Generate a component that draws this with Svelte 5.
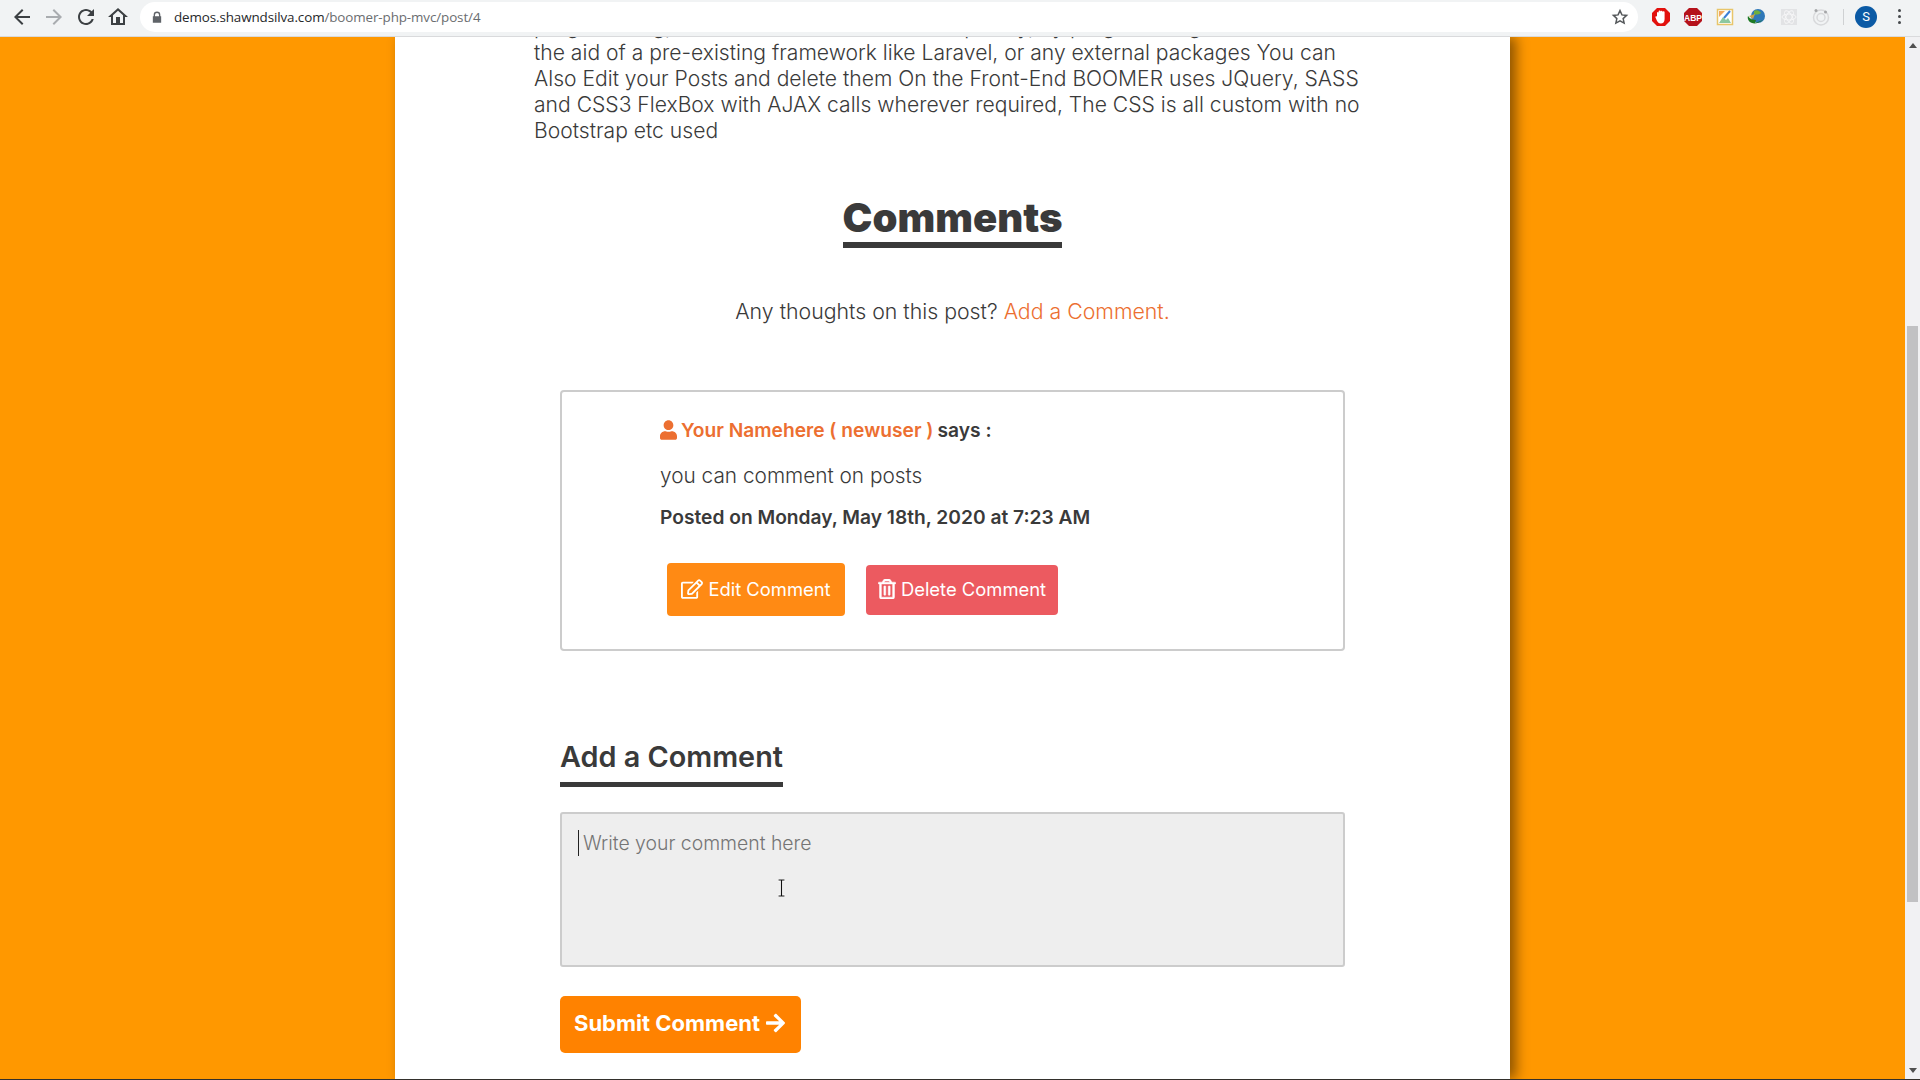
<script>
	const nav = [
		{ d: 'M20 11H7.83l5.59-5.59L12 4l-8 8 8 8 1.41-1.41L7.83 13H20v-2z', cls: 'on' },
		{ d: 'M4 11h12.17l-5.59-5.59L12 4l8 8-8 8-1.41-1.41L16.17 13H4v-2z', cls: 'off' },
		{ d: 'M17.65 6.35C16.2 4.9 14.21 4 12 4c-4.42 0-7.99 3.58-7.99 8s3.57 8 7.99 8c3.73 0 6.84-2.55 7.73-6h-2.08c-.82 2.33-3.04 4-5.65 4-3.31 0-6-2.69-6-6s2.69-6 6-6c1.66 0 3.14.69 4.22 1.78L13 11h7V4l-2.35 2.35z', cls: 'on' },
		{ d: 'M12 5.69l5 4.5V18h-3v-6h-4v6H7v-7.81l5-4.5M12 3L2 12h3v8h14v-8h3L12 3z', cls: 'on' }
	];
</script>

<div class="screen">
	<header class="toolbar">
		<div class="nav">
			{#each nav as n}
				<svg class="nav-icon {n.cls}" viewBox="0 0 24 24"><path d={n.d} /></svg>
			{/each}
		</div>
		<div class="omnibox">
			<svg class="lock" viewBox="0 0 12 14">
				<path d="M2 6V4.5a4 4 0 0 1 8 0V6h1v8H1V6zm1.6 0h4.8V4.5a2.4 2.4 0 0 0-4.8 0z" />
			</svg>
			<span class="url"><b>demos.shawndsilva.com</b>/boomer-php-mvc/post/4</span>
			<svg class="star" viewBox="0 0 24 24">
				<path d="M12 3.5l2.6 5.7 6.2.7-4.6 4.2 1.3 6.1L12 17.1l-5.5 3.1 1.3-6.1-4.6-4.2 6.2-.7z" />
			</svg>
		</div>
		<div class="extensions">
			<svg viewBox="0 0 20 20">
				<path fill="#e2110d" d="M6 1h8l5 5v8l-5 5H6l-5-5V6z" />
				<path fill="#fff" d="M6 9.5V6a1 1 0 0 1 1.6-.6V4.5a1 1 0 0 1 2 0 1 1 0 0 1 2 .4 1 1 0 0 1 2 .6v6.5c0 3-1.6 4.5-3.8 4.5-2 0-3-1-4-3L4.500 10.500c-.5-1 .7-1.800 1.500-1z" />
			</svg>
			<svg viewBox="0 0 20 20">
				<path fill="#b5121b" d="M6 1h8l5 5v8l-5 5H6l-5-5V6z" />
				<text x="10" y="13.500" text-anchor="middle" class="abp">ABP</text>
			</svg>
			<svg viewBox="0 0 20 20">
				<rect x="2.500" y="2.500" width="15" height="15" fill="#fff" stroke="#e8c56a" stroke-width="1.500" />
				<path fill="#8cc8a0" d="M4 16l4-6 3 3 2-2 3 5z" />
				<path fill="#f0a860" d="M4 4h6L4 10z" />
				<path stroke="#3d7fd6" stroke-width="2" d="M9 11l6-7" />
			</svg>
			<svg viewBox="0 0 20 20">
				<circle cx="11" cy="9" r="7" fill="#2f78b8" />
				<path fill="#6fae3e" d="M7 4c3-2 6 0 7 2-2 2-5 1-7 2z" />
				<path fill="#1e7a24" d="M1 9c2 3 5 4 8 4l-1 3 8-3c-4 3-8 4-11 3-3-1-5-4-4-7z" />
				<path fill="#c9a24a" d="M2 9l6-2-2 5z" />
			</svg>
			<svg viewBox="0 0 20 20">
				<rect x="2" y="2" width="16" height="16" fill="#e2e3e5" />
				<g fill="none" stroke="#f6f6f7" stroke-width="1">
					<ellipse cx="10" cy="10" rx="7" ry="3" />
					<ellipse cx="10" cy="10" rx="7" ry="3" transform="rotate(60 10 10)" />
					<ellipse cx="10" cy="10" rx="7" ry="3" transform="rotate(120 10 10)" />
				</g>
			</svg>
			<svg viewBox="0 0 20 20">
				<g fill="none" stroke="#d8d9db">
					<circle cx="10" cy="10.500" r="7.500" stroke-width="1.500" />
					<circle cx="10" cy="10.500" r="4" stroke-width="1.500" />
				</g>
				<circle cx="5" cy="3.500" r="1.500" fill="#a5a6a8" />
				<circle cx="14.500" cy="5" r="1.500" fill="#a5a6a8" />
			</svg>
		</div>
		<span class="divider"></span>
		<span class="avatar">S</span>
		<span class="dots"><i></i><i></i><i></i></span>
	</header>

	<div class="viewport">
		<main class="page">
			<div class="panel">
				<p class="body">
					programming, from scratch and written completely, by programming it without<br />
					the aid of a pre-existing framework like Laravel, or any external packages You can<br />
					Also Edit your Posts and delete them On the Front-End BOOMER uses JQuery, SASS<br />
					and CSS3 FlexBox with AJAX calls wherever required, The CSS is all custom with no<br />
					Bootstrap etc used
				</p>

				<section class="comments">
					<h2 class="title">Comments</h2>
					<p class="prompt">Any thoughts on this post? <a href="#add">Add a Comment.</a></p>

					<div class="column">
						<article class="card">
							<div class="author">
								<svg class="user" viewBox="0 0 448 512">
									<path d="M224 256c70.7 0 128-57.3 128-128S294.7 0 224 0 96 57.3 96 128s57.3 128 128 128zm89.6 32h-16.7c-22.2 10.2-46.9 16-72.9 16s-50.6-5.800-72.900-16h-16.700C60.200 288 0 348.200 0 422.400V464c0 26.500 21.500 48 48 48h352c26.500 0 48-21.500 48-48v-41.600c0-74.200-60.200-134.400-134.400-134.400z" />
								</svg>
								<span class="name">Your Namehere ( newuser )</span> says :
							</div>
							<p class="text">you can comment on posts</p>
							<p class="date">Posted on Monday, May 18th, 2020 at 7:23 AM</p>
							<div class="actions">
								<button class="btn edit">
									<svg viewBox="0 0 576 512">
										<path d="M402.300 344.900l32-32c5-5 13.700-1.500 13.700 5.700V464c0 26.500-21.500 48-48 48H48c-26.500 0-48-21.500-48-48V112c0-26.500 21.500-48 48-48h273.500c7.100 0 10.700 8.600 5.700 13.700l-32 32c-1.500 1.500-3.500 2.300-5.700 2.300H48v352h352V350.500c0-2.100.8-4.100 2.300-5.600zm156.600-201.800L296.300 405.700l-90.400 10c-26.200 2.900-48.500-19.200-45.600-45.600l10-90.400L432.900 17.100c22.900-22.900 59.900-22.900 82.700 0l43.200 43.200c22.900 22.900 22.900 60 .1 82.800zM460.100 174L402 115.900 216.200 301.800l-7.300 65.300 65.300-7.300L460.100 174zm64.800-79.700l-43.200-43.200c-4.100-4.100-10.800-4.100-14.800 0L436 82l58.100 58.100 30.900-30.900c4-4.200 4-10.800-.1-14.900z" />
									</svg>
									Edit Comment
								</button>
								<button class="btn delete">
									<svg viewBox="0 0 448 512">
										<path d="M268 416h24a12 12 0 0 0 12-12V188a12 12 0 0 0-12-12h-24a12 12 0 0 0-12 12v216a12 12 0 0 0 12 12zM432 80h-82.410l-34-56.700A48 48 0 0 0 274.410 0H173.590a48 48 0 0 0-41.160 23.300L98.410 80H16A16 16 0 0 0 0 96v16a16 16 0 0 0 16 16h16v336a48 48 0 0 0 48 48h288a48 48 0 0 0 48-48V128h16a16 16 0 0 0 16-16V96a16 16 0 0 0-16-16zM171.840 50.910A6 6 0 0 1 177 48h94a6 6 0 0 1 5.150 2.910L293.610 80H154.390zM368 464H80V128h288zm-212-48h24a12 12 0 0 0 12-12V188a12 12 0 0 0-12-12h-24a12 12 0 0 0-12 12v216a12 12 0 0 0 12 12z" />
									</svg>
									Delete Comment
								</button>
							</div>
						</article>

						<h3 class="subtitle" id="add">Add a Comment</h3>
						<div class="field">
							<textarea placeholder="Write your comment here"></textarea>
							<span class="caret"></span>
							<svg class="ibeam" viewBox="0 0 9 18">
								<path d="M1 1h7M1 17h7M4.500 1v16" fill="none" stroke="#fff" stroke-width="3" />
								<path d="M1.500 1h6M1.500 17h6M4.500 1v16" fill="none" stroke="#111" stroke-width="1.200" />
							</svg>
						</div>
						<button class="submit">
							Submit Comment
							<svg viewBox="0 0 448 512">
								<path d="M190.500 66.900l22.200-22.200c9.400-9.400 24.600-9.400 33.900 0L441 239c9.400 9.400 9.400 24.600 0 33.900L246.600 467.300c-9.400 9.400-24.600 9.400-33.900 0l-22.200-22.200c-9.500-9.500-9.300-25 .4-34.300L311.400 296H24c-13.300 0-24-10.700-24-24v-32c0-13.300 10.700-24 24-24h287.400L190.900 101.200c-9.800-9.300-10-24.800-.4-34.300z" />
							</svg>
						</button>
					</div>
				</section>
			</div>
		</main>

		<aside class="scrollbar">
			<span class="arrow up"></span>
			<div class="track"><div class="thumb"></div></div>
			<span class="arrow down"></span>
		</aside>
	</div>
</div>

<style>
	:global(body) {
		margin: 0;
		background: #fff;
	}

	.screen {
		width: 1920px;
		height: 1080px;
		display: flex;
		flex-direction: column;
		overflow: hidden;
		font-family: Inter, 'Liberation Sans', sans-serif;
		color: #3a3a3a;
		border-bottom: 1px solid #33302c;
		box-sizing: border-box;
	}

	/* browser chrome */
	.toolbar {
		height: 37px;
		flex-shrink: 0;
		box-sizing: border-box;
		display: flex;
		align-items: center;
		background: #f1f3f4;
		border-bottom: 1px solid #d9dadc;
		padding: 0 0 3px 10px;
		position: relative;
		z-index: 2;
	}

	.nav {
		display: flex;
		gap: 8px;
		width: 130px;
	}

	.nav-icon {
		width: 24px;
		height: 24px;
	}

	.nav-icon.on {
		fill: #3c4043;
	}

	.nav-icon.off {
		fill: #a9acaf;
	}

	.omnibox {
		width: 1498px;
		height: 30px;
		box-sizing: border-box;
		background: #fff;
		border-radius: 15px;
		display: flex;
		align-items: center;
		padding: 0 9px 0 12px;
	}

	.lock {
		width: 10px;
		height: 12px;
		fill: #5f6368;
		margin-right: 12px;
	}

	.url {
		flex: 1;
		font-family: 'Open Sans', sans-serif;
		font-size: 13.4px;
		color: #6a6d70;
		letter-spacing: -0.1px;
	}

	.url b {
		font-weight: 400;
		color: #26282a;
	}

	.star {
		width: 18px;
		height: 18px;
		fill: none;
		stroke: #55585b;
		stroke-width: 2;
	}

	.extensions {
		display: flex;
		gap: 12px;
		margin-left: 13px;
	}

	.extensions svg {
		width: 20px;
		height: 20px;
	}

	.abp {
		font-family: 'Liberation Sans', sans-serif;
		font-size: 8.500px;
		font-weight: 700;
		fill: #fff;
	}

	.divider {
		width: 1px;
		height: 16px;
		background: #cfd1d3;
		margin-left: 12px;
	}

	.avatar {
		width: 22px;
		height: 22px;
		margin-left: 11px;
		border-radius: 50%;
		background: #0b5aa5;
		color: #fff;
		font-size: 13px;
		text-align: center;
		line-height: 22px;
		font-family: Roboto, sans-serif;
	}

	.dots {
		display: flex;
		flex-direction: column;
		gap: 3px;
		margin-left: 21px;
	}

	.dots i {
		width: 3px;
		height: 3px;
		border-radius: 50%;
		background: #45484b;
	}

	/* page */
	.viewport {
		flex: 1;
		display: flex;
		min-height: 0;
	}

	.page {
		flex: 1;
		background: #ff9800;
		padding-left: 395px;
		overflow: hidden;
	}

	.panel {
		display: flow-root;
		width: 1115px;
		height: 100%;
		background: #fff;
		box-shadow: 6px 0 12px rgba(0, 0, 0, 0.45);
	}

	.body {
		margin: -23px 0 0;
		padding: 0 100px 0 139px;
		font-size: 21.1px;
		line-height: 26px;
		font-weight: 300;
		color: #3a3a3a;
	}

	.comments {
		display: flex;
		flex-direction: column;
		align-items: center;
	}

	.title {
		margin: 50px 0 0;
		font-size: 40px;
		line-height: 48px;
		font-weight: 900;
		color: #3a3a3a;
		border-bottom: 6px solid #3a3a3a;
	}

	.prompt {
		margin: 50px 0 0;
		font-size: 21.3px;
		line-height: 26px;
		font-weight: 300;
	}

	.prompt a {
		color: #ec6f31;
		text-decoration: none;
	}

	.column {
		align-self: flex-start;
		width: 785px;
		margin: 66px 0 0 165px;
	}

	.card {
		height: 261px;
		box-sizing: border-box;
		border: 2px solid #ccc;
		border-radius: 4px;
		padding: 25px 0 0 98px;
	}

	.author {
		display: flex;
		align-items: center;
		gap: 4px;
		font-size: 19.2px;
		line-height: 26px;
		font-weight: 600;
	}

	.user {
		width: 17px;
		height: 20px;
		fill: #ec6f31;
	}

	.name {
		color: #ec6f31;
	}

	.text {
		margin: 20px 0 0;
		font-size: 20.8px;
		line-height: 26px;
		font-weight: 300;
	}

	.date {
		margin: 15px 0 0;
		font-size: 19.2px;
		line-height: 26px;
		font-weight: 600;
	}

	.actions {
		display: flex;
		align-items: center;
		gap: 21px;
		margin: 33px 0 0 7px;
	}

	.btn {
		display: flex;
		align-items: center;
		justify-content: center;
		gap: 5px;
		padding: 0 0 2px;
		border: 0;
		border-radius: 4px;
		color: #fff;
		font-family: inherit;
		font-size: 18.4px;
		font-weight: 400;
	}

	.btn svg {
		fill: #fff;
		height: 20px;
	}

	.edit {
		width: 178px;
		height: 53px;
		background: #ff8a14;
	}

	.edit svg {
		width: 22px;
	}

	.delete {
		width: 192px;
		height: 50px;
		background: #ec5a60;
	}

	.delete svg {
		width: 18px;
		stroke: #fff;
		stroke-width: 12;
	}

	.subtitle {
		margin: 88px 0 0;
		width: fit-content;
		font-size: 28.8px;
		line-height: 36px;
		font-weight: 600;
		padding-bottom: 7px;
		border-bottom: 5px solid #3a3a3a;
	}

	.field {
		position: relative;
		margin-top: 25px;
		height: 155px;
	}

	textarea {
		display: block;
		width: 100%;
		height: 100%;
		box-sizing: border-box;
		border: 2px solid #ccc;
		border-radius: 3px;
		background: #eee;
		padding: 17px 21px;
		font-family: inherit;
		font-size: 19.4px;
		line-height: 24px;
		font-weight: 300;
		resize: none;
		outline: none;
	}

	textarea::placeholder {
		color: #757575;
	}

	.caret {
		position: absolute;
		left: 18px;
		top: 18px;
		width: 1px;
		height: 26px;
		background: #222;
	}

	.ibeam {
		position: absolute;
		left: 217px;
		top: 67px;
		width: 9px;
		height: 18px;
	}

	.submit {
		display: flex;
		align-items: center;
		gap: 6px;
		margin-top: 29px;
		width: 241px;
		height: 57px;
		padding: 0 0 3px 14px;
		border: 0;
		border-radius: 5px;
		background: #ff8200;
		color: #fff;
		font-family: inherit;
		font-size: 22px;
		font-weight: 700;
	}

	.submit svg {
		width: 19px;
		height: 22px;
		fill: #fff;
	}

	/* scrollbar */
	.scrollbar {
		width: 15px;
		flex-shrink: 0;
		display: flex;
		flex-direction: column;
		align-items: center;
		background: #f1f1f3;
	}

	.track {
		flex: 1;
		align-self: stretch;
		padding: 272px 2px 0;
	}

	.thumb {
		height: 576px;
		background: #c1c1c3;
	}

	.arrow {
		width: 0;
		height: 0;
		flex-shrink: 0;
		border-left: 4px solid transparent;
		border-right: 4px solid transparent;
		margin: 6px 0;
	}

	.arrow.up {
		border-bottom: 5px solid #505050;
	}

	.arrow.down {
		border-top: 5px solid #505050;
	}
</style>
